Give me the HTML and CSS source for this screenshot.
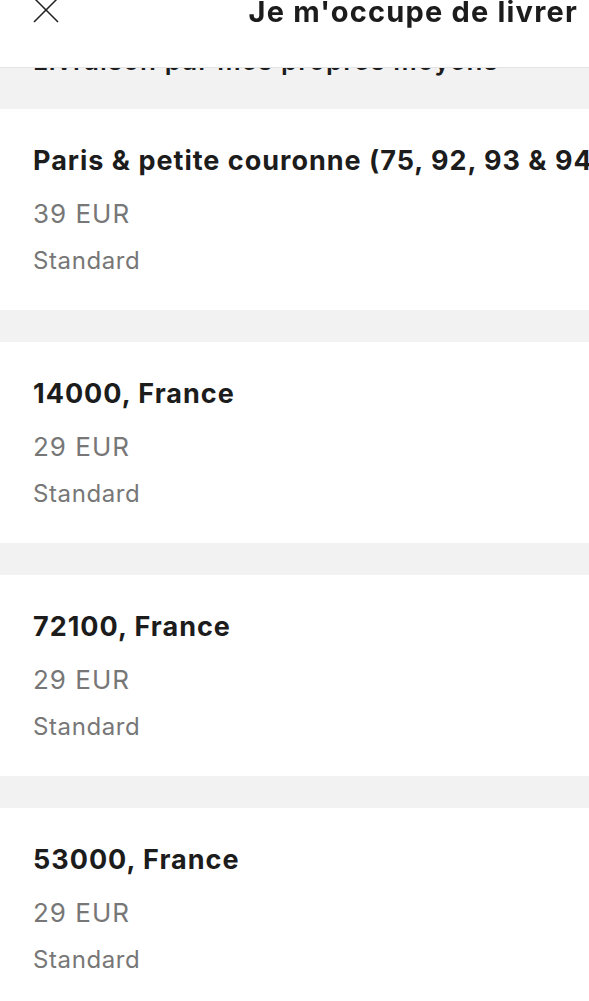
FILE: index.html
```html
<!DOCTYPE html>
<html>
<head>
  <title>Je m'occupe de livrer</title>
  <link rel="stylesheet" href="styles.css">
</head>
<body>
  <div class="top-bar">
    <svg class="close-icon" width="26" height="26" viewBox="0 0 26 26">
      <line x1="1" y1="1" x2="25" y2="25" stroke="#222" stroke-width="1.6"/>
      <line x1="25" y1="1" x2="1" y2="25" stroke="#222" stroke-width="1.6"/>
    </svg>
    <h1>Je m'occupe de livrer</h1>
  </div>

  <div class="list">
    <div class="section-title">Livraison par mes propres moyens</div>

    <div class="option">
      <div class="option-name">Paris &amp; petite couronne (75, 92, 93 &amp; 94)</div>
      <div class="option-price">39 EUR</div>
      <div class="option-type">Standard</div>
    </div>

    <div class="option">
      <div class="option-name">14000, France</div>
      <div class="option-price">29 EUR</div>
      <div class="option-type">Standard</div>
    </div>

    <div class="option">
      <div class="option-name">72100, France</div>
      <div class="option-price">29 EUR</div>
      <div class="option-type">Standard</div>
    </div>

    <div class="option">
      <div class="option-name">53000, France</div>
      <div class="option-price">29 EUR</div>
      <div class="option-type">Standard</div>
    </div>
  </div>
</body>
</html>
```

FILE: styles.css
```css
body {
  font-family: Inter, "Noto Sans", sans-serif;
  margin: 0;
  padding: 0;
  background-color: #f2f2f2;
  color: #1c1c1c;
  overflow: hidden;
}

.top-bar {
  position: fixed;
  top: 0;
  left: 0;
  right: 0;
  height: 67px;
  background-color: white;
  border-bottom: 1px solid #e4e4e4;
  display: flex;
  justify-content: space-between;
  align-items: flex-start;
  padding: 0 11px 0 33px;
  z-index: 2;
}

.close-icon {
  margin-top: -3px;
}

.top-bar h1 {
  margin: -2px 0 0 0;
  font-size: 29px;
  line-height: 28px;
  font-weight: 700;
  letter-spacing: 1.2px;
}

.list {
  display: flex;
  flex-direction: column;
  gap: 32px;
}

.section-title {
  padding: 45px 33px 0 33px;
  height: 77px;
  box-sizing: border-box;
  font-size: 26px;
  line-height: 32px;
  font-weight: 600;
  letter-spacing: 1.05px;
  white-space: nowrap;
}

.option {
  background-color: white;
  padding: 36px 0 35px 33px;
  white-space: nowrap;
  overflow: hidden;
}

.option-name {
  font-size: 27px;
  line-height: 32px;
  font-weight: 700;
  letter-spacing: 1px;
}

.option-price {
  margin-top: 21px;
  font-size: 26px;
  line-height: 32px;
  letter-spacing: 1px;
  color: #777;
}

.option-type {
  margin-top: 17px;
  font-size: 24px;
  line-height: 28px;
  letter-spacing: 0.6px;
  color: #777;
}
```
